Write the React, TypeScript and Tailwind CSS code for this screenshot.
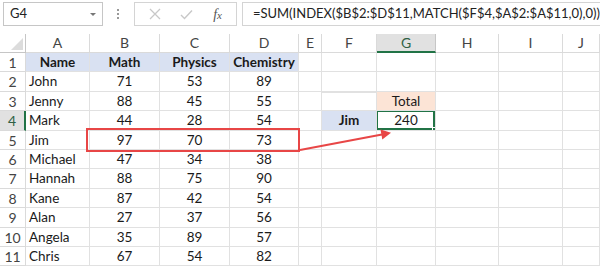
import React from "react"

const cols = ["A", "B", "C", "D", "E", "F", "G", "H", "I", "J"]

const data: [string, number, number, number][] = [
  ["John", 71, 53, 89],
  ["Jenny", 88, 45, 55],
  ["Mark", 44, 28, 54],
  ["Jim", 97, 70, 73],
  ["Michael", 47, 34, 38],
  ["Hannah", 88, 75, 90],
  ["Kane", 87, 42, 54],
  ["Alan", 27, 37, 56],
  ["Angela", 35, 89, 57],
  ["Chris", 67, 54, 82],
]

const cell = "border-r border-b border-[#e1e1e1] h-[19.4px] leading-[19px] overflow-hidden whitespace-nowrap"

function FormulaBar() {
  return (
    <div className="flex items-center h-[34px] pt-[2px] pb-[8px]">
      <div className="ml-[3px] w-[102px] h-[24px] border border-[#c6c6c6] flex items-center justify-between pl-[6px] pr-[5px] text-[13px] text-[#222]">
        <span>G4</span>
        <svg width="8" height="5" viewBox="0 0 8 5">
          <path d="M1 1 L4 4 L7 1 Z" fill="#777" />
        </svg>
      </div>
      <div className="w-[32px] flex flex-col items-center justify-center gap-[2px]">
        <span className="w-[2px] h-[2px] bg-[#999]" />
        <span className="w-[2px] h-[2px] bg-[#999]" />
        <span className="w-[2px] h-[2px] bg-[#999]" />
      </div>
      <div className="w-[106px] h-[24px] border border-[#d4d4d4] flex items-center justify-around px-[4px]">
        <svg width="12" height="12" viewBox="0 0 12 12">
          <path d="M1 1 L11 11 M11 1 L1 11" stroke="#c8c8c8" strokeWidth="1.3" />
        </svg>
        <svg width="13" height="11" viewBox="0 0 13 11">
          <path d="M1 6 L4.5 9.5 L12 1.5" stroke="#c8c8c8" strokeWidth="1.4" fill="none" />
        </svg>
        <span className="text-[14px] italic text-[#555] font-['Liberation_Serif',serif]">
          f<span className="text-[11px]">x</span>
        </span>
      </div>
      <div className="ml-[5px] flex-1 h-[24px] border border-[#d4d4d4] border-r-0 flex items-center pl-[10px] text-[13px] text-[#222] whitespace-nowrap">
        =SUM(INDEX($B$2:$D$11,MATCH($F$4,$A$2:$A$11,0),0))
      </div>
    </div>
  )
}

export default function App() {
  return (
    <div className="w-[600px] h-[268px] bg-white overflow-hidden relative font-['Lato','Liberation_Sans',sans-serif] text-[13.5px] text-[#1a1a1a]">
      <FormulaBar />

      <div className="grid grid-cols-[26px_64px_70px_70px_69px_23px_55px_59px_63px_64px_1fr]">
        {/* column headers */}
        <div className="h-[19px] border-r border-b border-[#c6c6c6] relative">
          <svg className="absolute right-[2px] bottom-[2px]" width="12" height="12" viewBox="0 0 12 12">
            <path d="M12 0 L12 12 L0 12 Z" fill="#dcdcdc" />
          </svg>
        </div>
        {cols.map((c) => (
          <div
            key={c}
            className={
              c === "G"
                ? "h-[19px] bg-[#e1e1e1] border-r border-[#c6c6c6] border-b-2 border-b-[#217346] text-center text-[#2f5f44] text-[14px] leading-[18px]"
                : "h-[19px] border-r border-b border-[#dadada] text-center text-[#444] text-[14px] leading-[18px]"
            }
          >
            {c}
          </div>
        ))}

        {/* row 1 */}
        <RowHead n={1} />
        <div className={cell + " bg-[#d9e1f2] font-bold text-center"}>Name</div>
        <div className={cell + " bg-[#d9e1f2] font-bold text-center"}>Math</div>
        <div className={cell + " bg-[#d9e1f2] font-bold text-center"}>Physics</div>
        <div className={cell + " bg-[#d9e1f2] font-bold text-center"}>Chemistry</div>
        {Array.from({ length: 6 }).map((_, i) => (
          <div key={i} className={cell} />
        ))}

        {data.map((r, i) => {
          const n = i + 2
          return (
            <React.Fragment key={n}>
              <RowHead n={n} active={n === 4} />
              <div className={cell + " pl-[3px]"}>{r[0]}</div>
              <div className={cell + " text-center"}>{r[1]}</div>
              <div className={cell + " text-center"}>{r[2]}</div>
              <div className={cell + " text-center"}>{r[3]}</div>
              <div className={cell} />
              {n === 3 ? (
                <>
                  <div className={cell + " border-l border-t border-[#d4d4d4] -ml-px"} />
                  <div className={cell + " bg-[#fce4d6] text-center"}>Total</div>
                </>
              ) : n === 4 ? (
                <>
                  <div className={cell + " bg-[#d9e1f2] font-bold text-center"}>Jim</div>
                  <div className={cell + " relative text-center"}>
                    240
                    <div className="absolute -left-px -top-px right-0 bottom-0 border-2 border-[#217346]" />
                    <div className="absolute -right-[2px] -bottom-[2px] w-[5px] h-[5px] bg-[#217346] border border-white" />
                  </div>
                </>
              ) : (
                <>
                  <div className={cell} />
                  <div className={cell} />
                </>
              )}
              <div className={cell} />
              <div className={cell} />
              <div className={cell} />
            </React.Fragment>
          )
        })}
      </div>

      {/* red highlight over row 5 */}
      <div className="absolute left-[86px] top-[128px] w-[214px] h-[24px] border-2 border-[#e84646]" />

      {/* arrow */}
      <svg className="absolute left-0 top-0 pointer-events-none" width="600" height="268">
        <line x1="300" y1="150" x2="382" y2="134.5" stroke="#e84646" strokeWidth="2" />
        <path d="M391 132.8 L380.5 129.6 L382.3 139.4 Z" fill="#e84646" />
      </svg>
    </div>
  )
}

function RowHead({ n, active }: { n: number; active?: boolean }) {
  return (
    <div
      className={
        active
          ? "h-[19.4px] leading-[19px] bg-[#e1e1e1] border-r-2 border-r-[#217346] border-b border-[#dadada] text-center text-[#2f5f44] text-[14px]"
          : "h-[19.4px] leading-[19px] border-r border-b border-[#dadada] text-center text-[#444] text-[14px]"
      }
    >
      {n}
    </div>
  )
}
